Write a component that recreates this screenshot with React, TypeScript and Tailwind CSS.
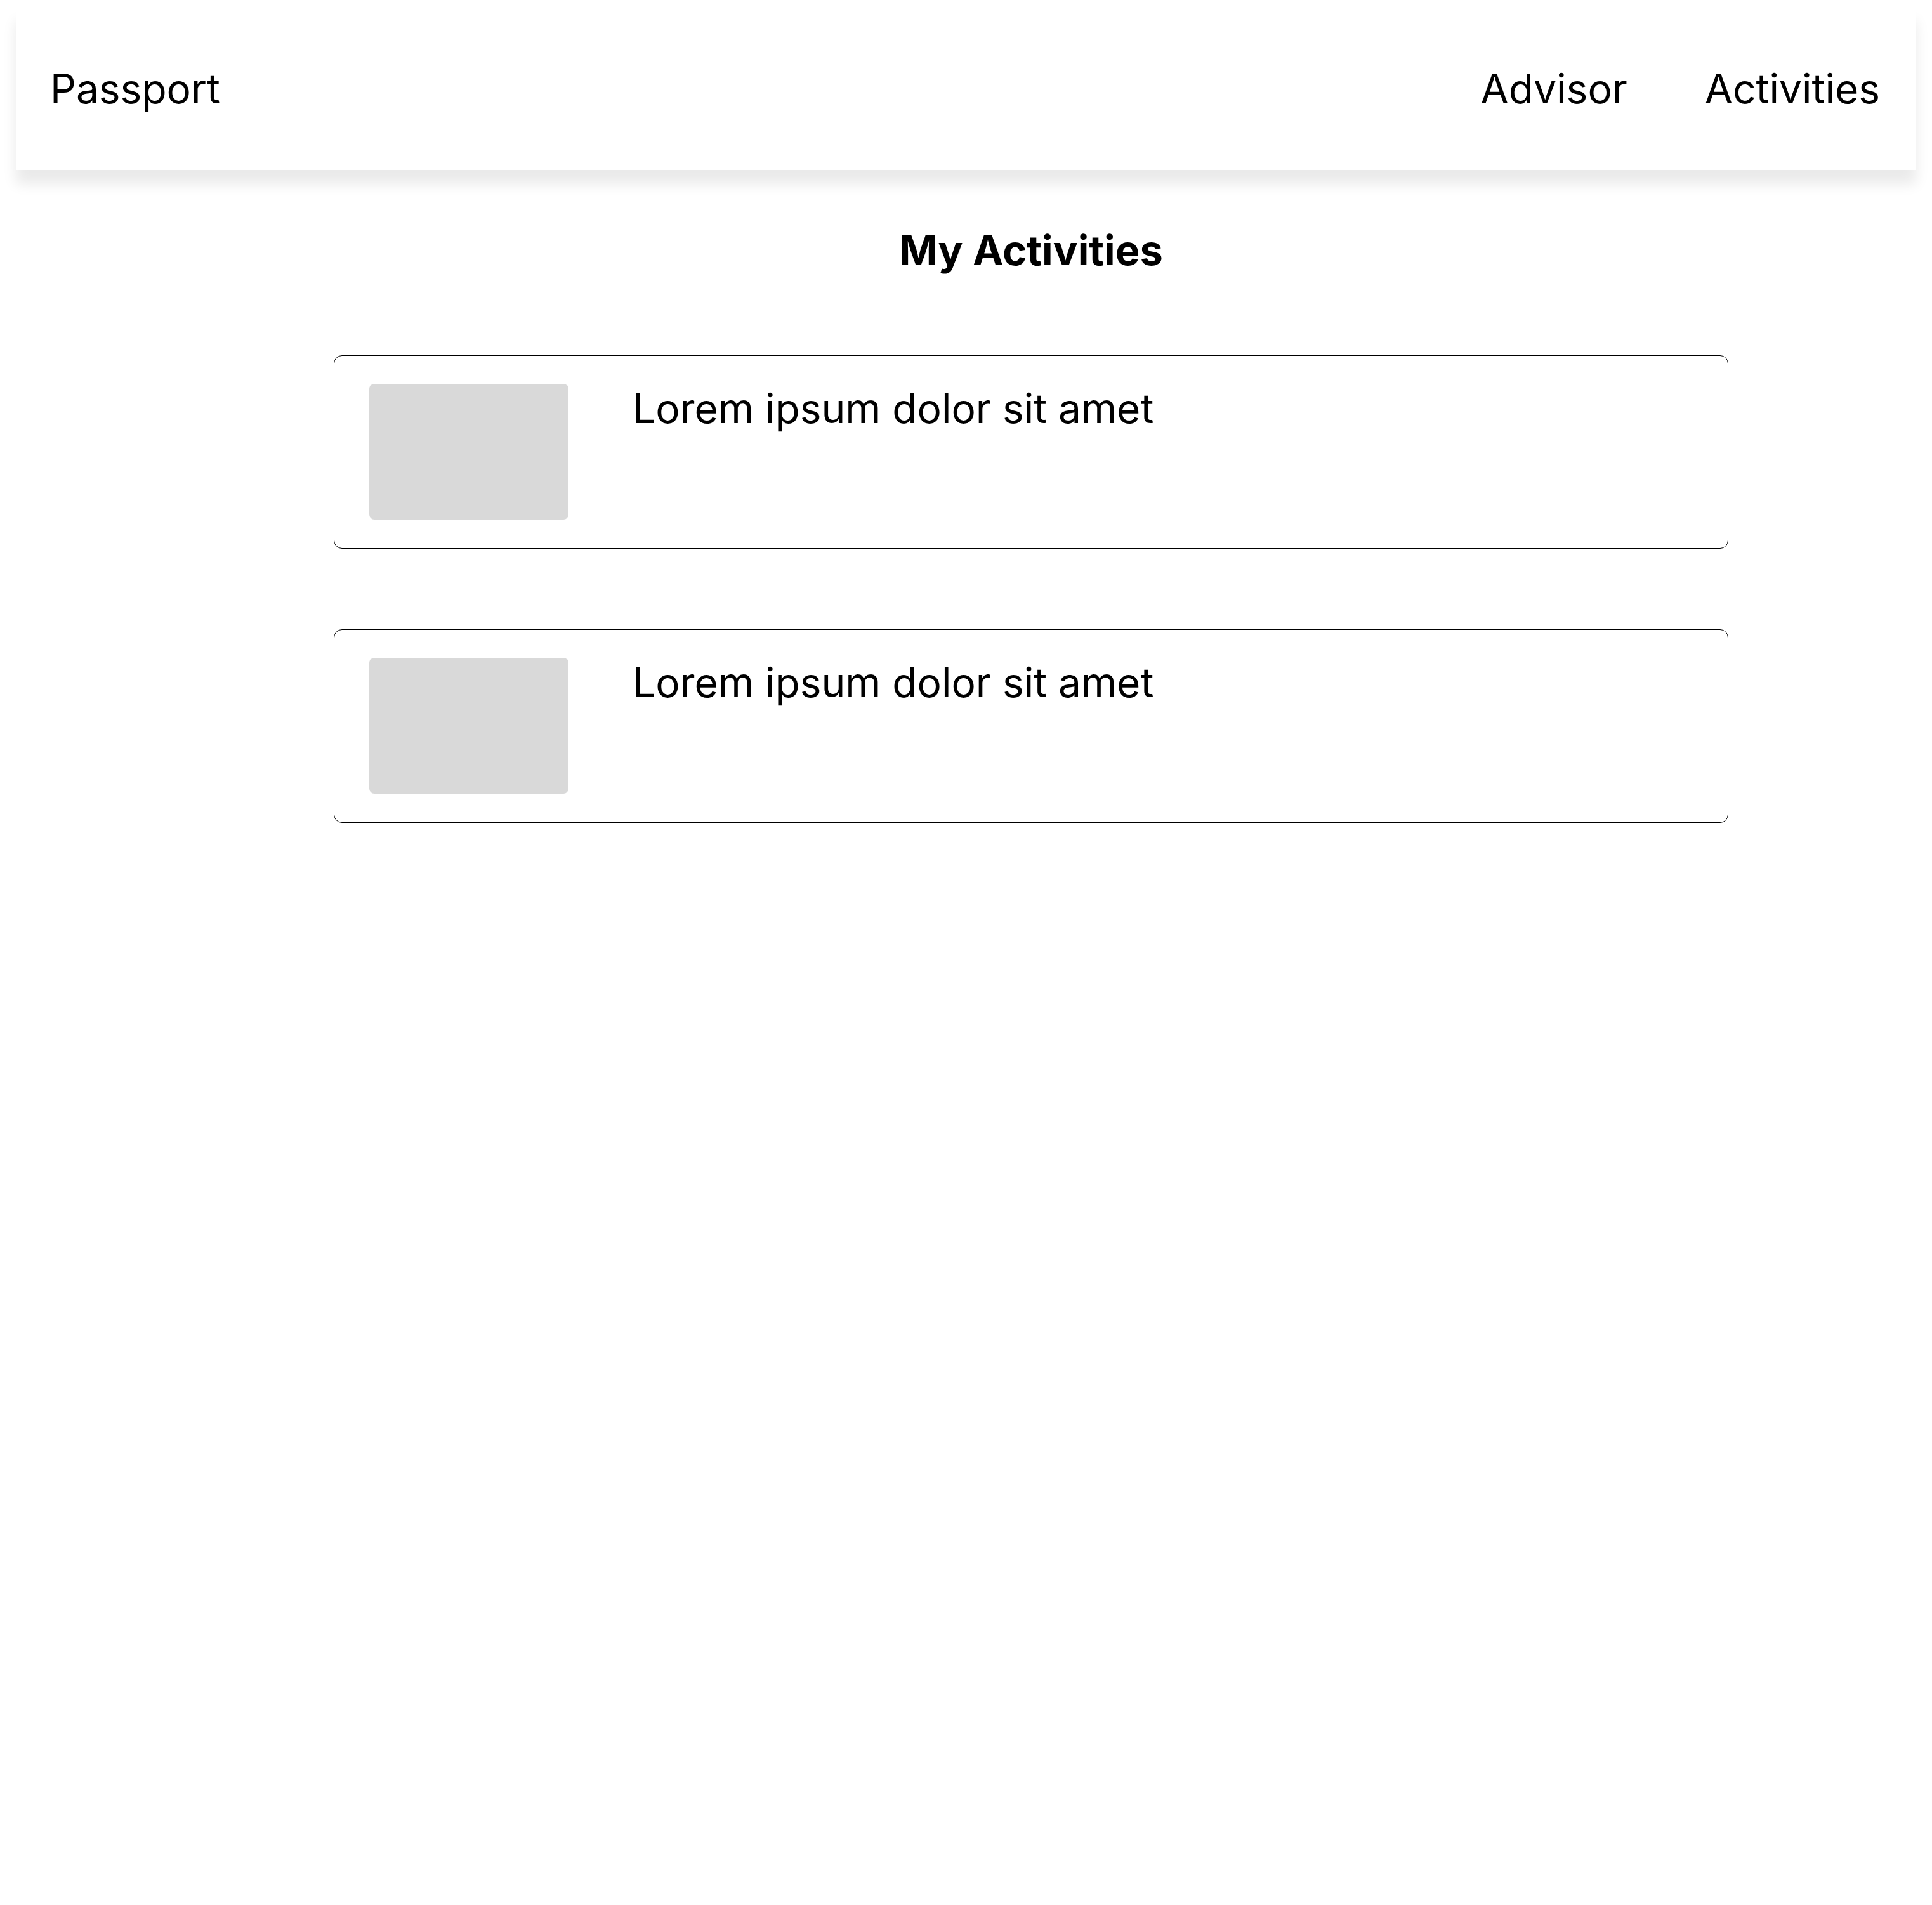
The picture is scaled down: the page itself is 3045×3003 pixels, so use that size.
const activities = [
  { id: 1, title: "Lorem ipsum dolor sit amet" },
  { id: 2, title: "Lorem ipsum dolor sit amet" },
];

export default function App() {
  return (
    <div className="min-h-screen bg-white font-['Inter',sans-serif] text-black">
      <header className="mx-[25px] mt-[11px] flex h-[257px] items-center justify-between bg-white pl-[54px] pr-[57px] shadow-[0_22px_20px_rgba(0,0,0,0.085)]">
        <span className="text-[64px] leading-[77px]">Passport</span>
        <nav className="flex gap-[122px] text-[64px] leading-[77px]">
          <a href="#">Advisor</a>
          <a href="#">Activities</a>
        </nav>
      </header>

      <main className="flex flex-col items-center pl-[205px] pt-[88px]">
        <h1 className="text-[65px] font-bold leading-[78px]">My Activities</h1>
        <ul className="mt-[126px] flex w-[2198px] flex-col gap-[127px]">
          {activities.map((item) => (
            <li
              key={item.id}
              className="flex h-[305px] items-start gap-[101px] rounded-[13px] border border-black pl-[55px] pt-[44px]"
            >
              <div className="h-[214px] w-[314px] shrink-0 rounded-[8px] bg-[#d9d9d9]" />
              <p className="text-[64px] leading-[77px]">{item.title}</p>
            </li>
          ))}
        </ul>
      </main>
    </div>
  );
}
